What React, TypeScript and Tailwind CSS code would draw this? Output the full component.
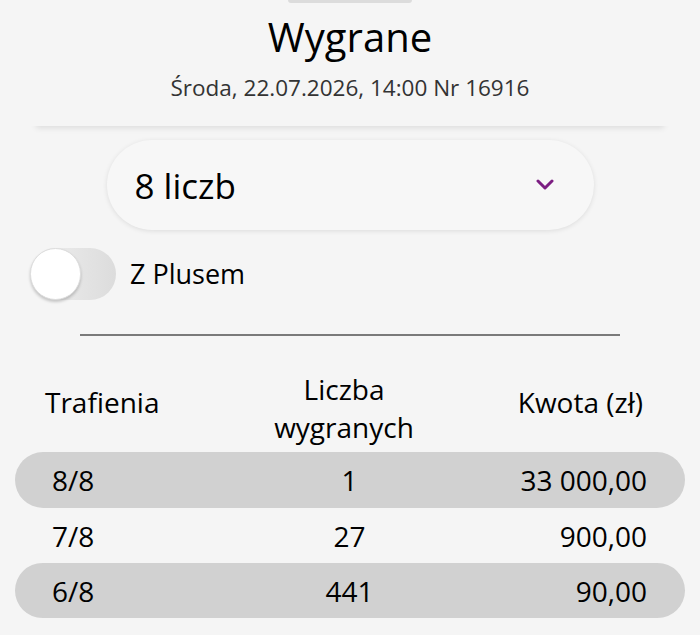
const rows = [
  { hit: '8/8', count: '1', amount: '33 000,00', shaded: true },
  { hit: '7/8', count: '27', amount: '900,00', shaded: false },
  { hit: '6/8', count: '441', amount: '90,00', shaded: true },
];

export default function App() {
  return (
    <main className="relative h-[635px] w-[700px] overflow-hidden bg-[#f5f5f5] text-black" style={{ fontFamily: '"Open Sans", "Noto Sans", sans-serif' }}>
      <div className="absolute left-[288px] top-0 h-[3px] w-[124px] rounded-b bg-[#dcdcdc]" />
      <header className="mx-[30px] flex h-[126px] flex-col items-center bg-[#f5f5f5] pt-[13px] shadow-[0_8px_6px_-6px_rgba(0,0,0,0.1)]">
        <h1 className="text-[40px] leading-[48px]">Wygrane</h1>
        <p className="mt-[12px] text-[22.5px] leading-[30px] text-[#333]">Środa, 22.07.2026, 14:00 Nr 16916</p>
      </header>

      <div className="mt-[14px] flex justify-center">
        <button className="flex h-[90px] w-[487px] items-center justify-between rounded-full bg-[#f7f7f7] pl-[28px] pr-[40px] shadow-[0_1px_5px_rgba(0,0,0,0.1)]">
          <span className="text-[35px] leading-none">8 liczb</span>
          <svg width="18" height="12" viewBox="0 0 18 12" fill="none">
            <polyline points="2,2 9,9 16,2" stroke="#7c1e82" strokeWidth="3" strokeLinecap="round" strokeLinejoin="round" />
          </svg>
        </button>
      </div>

      <div className="mt-[18px] flex items-center pl-[30px]">
        <div className="relative h-[52px] w-[86px] rounded-full bg-gradient-to-r from-[#f0f0f0] to-[#dcdcdc]">
          <div className="absolute left-0 top-0 h-[52px] w-[51px] rounded-full border border-[#ddd] bg-white shadow-[0_2px_3px_rgba(0,0,0,0.2)]" />
        </div>
        <span className="ml-[14px] text-[27px]">Z Plusem</span>
      </div>

      <div className="mx-[80px] mt-[34px] h-[2px] bg-[#7a7a7a]" />

      <div className="mt-[34px] grid grid-cols-3 items-start pl-[45px] pr-[57px] text-[28px] leading-[38px]">
        <span className="pt-[13px]">Trafienia</span>
        <span className="text-center">Liczba<br />wygranych</span>
        <span className="pt-[13px] text-right">Kwota (zł)</span>
      </div>

      <div className="mt-[6px] px-[15px]">
        {rows.map((r, i) => (
          <div
            key={r.hit}
            className={`grid grid-cols-3 items-center rounded-full pl-[37px] pr-[38px] text-[28px] ${i === 0 ? 'h-[56px]' : 'h-[55px]'} ${r.shaded ? 'bg-[#d1d1d1]' : ''}`}
          >
            <span>{r.hit}</span>
            <span className="text-center">{r.count}</span>
            <span className="text-right">{r.amount}</span>
          </div>
        ))}
      </div>
    </main>
  );
}
